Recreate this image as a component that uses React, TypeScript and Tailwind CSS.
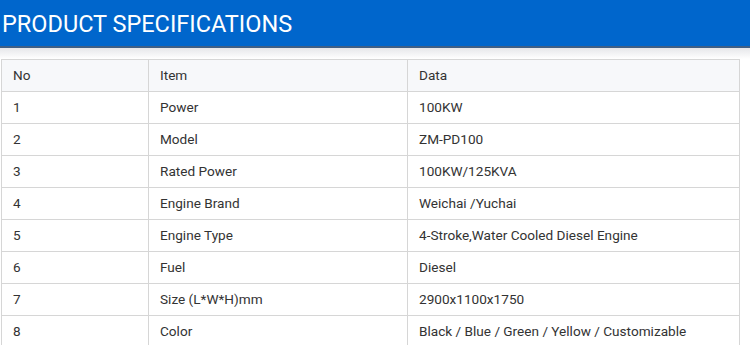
export default function App() {
  const rows = [
    ["1", "Power", "100KW"],
    ["2", "Model", "ZM-PD100"],
    ["3", "Rated Power", "100KW/125KVA"],
    ["4", "Engine Brand", "Weichai /Yuchai"],
    ["5", "Engine Type", "4-Stroke,Water Cooled Diesel Engine"],
    ["6", "Fuel", "Diesel"],
    ["7", "Size (L*W*H)mm", "2900x1100x1750"],
    ["8", "Color", "Black / Blue / Green / Yellow / Customizable"],
  ]

  return (
    <div className="h-[345px] w-[750px] overflow-hidden bg-white font-['Roboto',sans-serif]">
      <div className="h-[48px] border-b-2 border-[#3f5f86] bg-[#0066cc] pl-[2px]">
        <h2 className="pt-[8px] text-[23.5px] leading-[32px] font-normal text-white">PRODUCT SPECIFICATIONS</h2>
      </div>
      <div className="h-[11px] bg-gradient-to-b from-[#e6e7ea] to-white" />
      <table className="ml-[1px] w-[739px] border-collapse text-[13.6px] text-[#333]">
        <thead>
          <tr className="h-[32px] bg-[#f7f8fa]">
            <th className="w-[147px] border border-[#d6d6d6] pl-[11px] text-left font-normal">No</th>
            <th className="w-[259px] border border-[#d6d6d6] pl-[11px] text-left font-normal">Item</th>
            <th className="border border-[#d6d6d6] pl-[11px] text-left font-normal">Data</th>
          </tr>
        </thead>
        <tbody>
          {rows.map((r) => (
            <tr key={r[0]} className="h-[32px]">
              <td className="border border-[#d6d6d6] pl-[11px]">{r[0]}</td>
              <td className="border border-[#d6d6d6] pl-[11px]">{r[1]}</td>
              <td className="border border-[#d6d6d6] pl-[11px]">{r[2]}</td>
            </tr>
          ))}
        </tbody>
      </table>
    </div>
  )
}
